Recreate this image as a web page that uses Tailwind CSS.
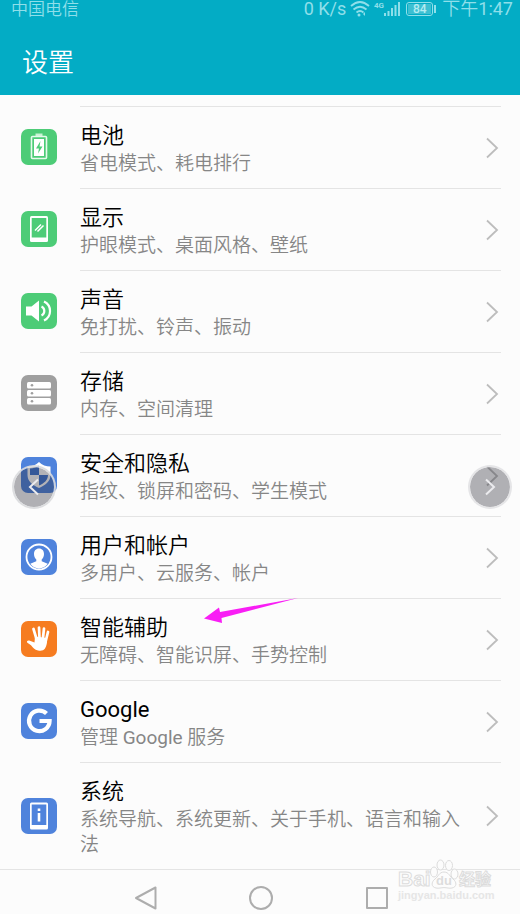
<!DOCTYPE html>
<html lang="zh-CN">
<head>
<meta charset="utf-8">
<meta name="viewport" content="width=device-width, initial-scale=1">
<title>设置</title>
<script src="https://cdn.jsdelivr.net/npm/@tailwindcss/browser@4"></script>
</head>
<body class="bg-[#fcfcfc] font-['Roboto','Noto_Sans_CJK_SC',sans-serif]">
<div class="relative flex min-h-screen flex-col overflow-hidden">

  <header class="bg-[#03acc5] pb-[14px]">
    <div class="flex h-[18px] items-center justify-between pr-[7px] pl-[11px] text-[17px] leading-[18px] font-[350] text-[#8fdfea]">
      <span>中国电信</span>
      <div class="flex items-center">
        <span class="text-lg leading-[18px] font-normal">0 K/s</span>
        <svg class="ml-1 h-4 w-5" viewBox="0 0 20 16" fill="none" stroke="currentColor" stroke-width="1.8" aria-label="Wi-Fi">
          <path d="M1 5Q10-3 19 5M3.500 8.500Q10 3 16.500 8.500M6.500 11.500Q10 8.500 13.500 11.500"/><circle cx="9" cy="14" r="1.500" fill="currentColor" stroke="none"/><path d="M15 11v4l-2-2z" fill="currentColor" stroke="none"/>
        </svg>
        <svg class="ml-1 h-4 w-7" viewBox="0 0 28 16" aria-label="4G">
          <text x="0" y="7" font-size="8" font-weight="700" fill="currentColor">4G</text>
          <path d="M10 12h2v3h-2zM13.500 10h2v5h-2zM17 7h2v8h-2zM20.500 4h2v11h-2zM24 1h2v14h-2z" fill="currentColor"/>
        </svg>
        <span class="ml-1 flex h-[14px] w-[27px] items-center justify-center rounded-[3px] border border-current p-px"><span class="flex h-full w-full items-center justify-center bg-[#3dbfd1] text-xs leading-none font-medium text-[#b5edf3]">84</span></span>
        <span class="h-2 w-[2px] ml-px bg-[#8fdfea]"></span>
        <span class="ml-[6px] text-lg leading-[18px] font-normal"><span class="font-[350]">下午</span>1:47</span>
      </div>
    </div>
    <h1 class="mt-7 pl-[22px] text-[26px] leading-[35px] font-[350] text-white">设置</h1>
  </header>

  <main class="pt-[11px]">
    <ul>
      <li><a href="#battery" class="flex items-center pr-[19px] pl-[21px]">
        <svg class="size-9 shrink-0" viewBox="0 0 36 36"><rect width="36" height="36" rx="7" fill="#4dcc77"/><path d="M14.500 4.500h7v3h-7z" fill="#c9f2d5"/><rect x="10.500" y="7.500" width="15" height="22" rx="1" fill="none" stroke="#e6faec" stroke-width="1.600"/><path d="M13 10h10v17H13z" fill="#fff"/><path d="M19.500 12l-4.500 7.500h3l-1 5 4.500-7h-3z" fill="#4dcc77"/></svg>
        <div class="ml-[23px] flex flex-1 items-center border-t border-[#e4e4e4] pt-[14px] pb-3"><div class="flex-1"><h2 class="text-[22px] leading-[30px] font-[350] text-black">电池</h2><p class="text-[19px] leading-[25px] font-[350] text-[#868686]">省电模式、耗电排行</p></div>
        <svg class="mr-[2px] ml-6 h-6 w-[14px] shrink-0" viewBox="0 0 14 24" fill="none" stroke="#bdbdbd" stroke-width="1.800"><path d="M2 1.500l10 9.500-10 9.500"/></svg></div>
      </a></li>
      <li><a href="#display" class="flex items-center pr-[19px] pl-[21px]">
        <svg class="size-9 shrink-0" viewBox="0 0 36 36"><rect width="36" height="36" rx="7" fill="#4dcc77"/><rect x="9" y="5" width="18" height="26" rx="1.500" fill="#fff"/><path d="M10.700 7h14.600v19.500H10.700z" fill="#4dcc77"/><path d="M14 19.500l6-6M16.500 20.500l6-6" stroke="#fff" stroke-width="1.500"/></svg>
        <div class="ml-[23px] flex flex-1 items-center border-t border-[#e4e4e4] pt-[14px] pb-3"><div class="flex-1"><h2 class="text-[22px] leading-[30px] font-[350] text-black">显示</h2><p class="text-[19px] leading-[25px] font-[350] text-[#868686]">护眼模式、桌面风格、壁纸</p></div>
        <svg class="mr-[2px] ml-6 h-6 w-[14px] shrink-0" viewBox="0 0 14 24" fill="none" stroke="#bdbdbd" stroke-width="1.800"><path d="M2 1.500l10 9.500-10 9.500"/></svg></div>
      </a></li>
      <li><a href="#sound" class="flex items-center pr-[19px] pl-[21px]">
        <svg class="size-9 shrink-0" viewBox="0 0 36 36"><rect width="36" height="36" rx="7" fill="#4dcc77"/><path d="M5 13.500h5.500L18 7.500v21l-7.500-6H5z" fill="#fff"/><path d="M20.500 13.500a5 5 0 0 1 0 9M23 8.500a10.500 10.500 0 0 1 0 19" fill="none" stroke="#fff" stroke-width="2.200"/></svg>
        <div class="ml-[23px] flex flex-1 items-center border-t border-[#e4e4e4] pt-[14px] pb-3"><div class="flex-1"><h2 class="text-[22px] leading-[30px] font-[350] text-black">声音</h2><p class="text-[19px] leading-[25px] font-[350] text-[#868686]">免打扰、铃声、振动</p></div>
        <svg class="mr-[2px] ml-6 h-6 w-[14px] shrink-0" viewBox="0 0 14 24" fill="none" stroke="#bdbdbd" stroke-width="1.800"><path d="M2 1.500l10 9.500-10 9.500"/></svg></div>
      </a></li>
      <li><a href="#storage" class="flex items-center pr-[19px] pl-[21px]">
        <svg class="size-9 shrink-0" viewBox="0 0 36 36"><rect width="36" height="36" rx="7" fill="#9f9f9f"/><g fill="#fff"><rect x="6" y="7" width="24" height="6.500" rx="1.500"/><rect x="6" y="15" width="24" height="6.500" rx="1.500"/><rect x="6" y="23" width="24" height="6.500" rx="1.500"/></g><g fill="#9f9f9f"><circle cx="11" cy="10.200" r="1.300"/><circle cx="11" cy="18.200" r="1.300"/><circle cx="11" cy="26.200" r="1.300"/></g></svg>
        <div class="ml-[23px] flex flex-1 items-center border-t border-[#e4e4e4] pt-[14px] pb-3"><div class="flex-1"><h2 class="text-[22px] leading-[30px] font-[350] text-black">存储</h2><p class="text-[19px] leading-[25px] font-[350] text-[#868686]">内存、空间清理</p></div>
        <svg class="mr-[2px] ml-6 h-6 w-[14px] shrink-0" viewBox="0 0 14 24" fill="none" stroke="#bdbdbd" stroke-width="1.800"><path d="M2 1.500l10 9.500-10 9.500"/></svg></div>
      </a></li>
      <li><a href="#security" class="flex items-center pr-[19px] pl-[21px]">
        <svg class="size-9 shrink-0" viewBox="0 0 36 36"><rect width="36" height="36" rx="7" fill="#4f83dc"/><path d="M18 5C15 8 11 9.500 6.500 9.500V18c0 6.500 5.500 10.500 11.500 13C24 28.500 29.500 24.500 29.500 18V9.500C25 9.500 21 8 18 5z" fill="#fff"/><path d="M9 11.500c3.500 0 6.500-1 9-3V18H9zM18 18h9c0 5-4 8.500-9 10.500z" fill="#3f76d2"/></svg>
        <div class="ml-[23px] flex flex-1 items-center border-t border-[#e4e4e4] pt-[14px] pb-3"><div class="flex-1"><h2 class="text-[22px] leading-[30px] font-[350] text-black">安全和隐私</h2><p class="text-[19px] leading-[25px] font-[350] text-[#868686]">指纹、锁屏和密码、学生模式</p></div>
        <svg class="mr-[2px] ml-6 h-6 w-[14px] shrink-0" viewBox="0 0 14 24" fill="none" stroke="#bdbdbd" stroke-width="1.800"><path d="M2 1.500l10 9.500-10 9.500"/></svg></div>
      </a></li>
      <li><a href="#users" class="flex items-center pr-[19px] pl-[21px]">
        <svg class="size-9 shrink-0" viewBox="0 0 36 36"><rect width="36" height="36" rx="7" fill="#4f83dc"/><circle cx="18" cy="18" r="12.500" fill="none" stroke="#fff" stroke-width="1.800"/><path d="M18 9.500c3.200 0 5 2.300 5 5.500 0 2.500-1 4.300-2.300 5.400v1.800l6 2.600A11.500 11.500 0 0 1 18 29.500a11.500 11.500 0 0 1-8.700-4.700l6-2.600v-1.800C14 19.300 13 17.500 13 15c0-3.200 1.800-5.500 5-5.500z" fill="#fff"/></svg>
        <div class="ml-[23px] flex flex-1 items-center border-t border-[#e4e4e4] pt-[14px] pb-3"><div class="flex-1"><h2 class="text-[22px] leading-[30px] font-[350] text-black">用户和帐户</h2><p class="text-[19px] leading-[25px] font-[350] text-[#868686]">多用户、云服务、帐户</p></div>
        <svg class="mr-[2px] ml-6 h-6 w-[14px] shrink-0" viewBox="0 0 14 24" fill="none" stroke="#bdbdbd" stroke-width="1.800"><path d="M2 1.500l10 9.500-10 9.500"/></svg></div>
      </a></li>
      <li><a href="#assist" class="flex items-center pr-[19px] pl-[21px]">
        <svg class="size-9 shrink-0" viewBox="0 0 36 36"><rect width="36" height="36" rx="7" fill="#f67c20"/><path d="M12.500 8l3 10M18 6.500l.5 11M23 7.500l-1.200 11M27 11l-2.500 10" stroke="#fff" stroke-width="2.700" stroke-linecap="round"/><path d="M14 15.500l12 1.500c.3 4-.2 7.500-2 10.500-1.500 2.200-4 2.500-7 2-3.500-.6-5-2.800-7-5.200l-3.600-2.600c-1.200-1.200.2-2.700 1.800-2.200l5.300 2z" fill="#fff"/></svg>
        <div class="ml-[23px] flex flex-1 items-center border-t border-[#e4e4e4] pt-[14px] pb-3"><div class="flex-1"><h2 class="text-[22px] leading-[30px] font-[350] text-black">智能辅助</h2><p class="text-[19px] leading-[25px] font-[350] text-[#868686]">无障碍、智能识屏、手势控制</p></div>
        <svg class="mr-[2px] ml-6 h-6 w-[14px] shrink-0" viewBox="0 0 14 24" fill="none" stroke="#bdbdbd" stroke-width="1.800"><path d="M2 1.500l10 9.500-10 9.500"/></svg></div>
      </a></li>
      <li><a href="#google" class="flex items-center pr-[19px] pl-[21px]">
        <svg class="size-9 shrink-0" viewBox="0 0 36 36"><rect width="36" height="36" rx="7" fill="#4f83dc"/><path d="M25.500 10.500A10.300 10.300 0 1 0 28.600 18H18.500" fill="none" stroke="#fff" stroke-width="4.200"/></svg>
        <div class="ml-[23px] flex flex-1 items-center border-t border-[#e4e4e4] pt-[14px] pb-3"><div class="flex-1"><h2 class="text-[22px] leading-[30px] font-normal text-black">Google</h2><p class="text-[19px] leading-[25px] font-[350] text-[#868686]">管理 <span class="font-normal">Google</span> 服务</p></div>
        <svg class="mr-[2px] ml-6 h-6 w-[14px] shrink-0" viewBox="0 0 14 24" fill="none" stroke="#bdbdbd" stroke-width="1.800"><path d="M2 1.500l10 9.500-10 9.500"/></svg></div>
      </a></li>
      <li><a href="#system" class="flex items-center pr-[19px] pl-[21px]">
        <svg class="size-9 shrink-0" viewBox="0 0 36 36"><rect width="36" height="36" rx="7" fill="#4f83dc"/><rect x="9" y="4.500" width="18" height="27" rx="1.500" fill="#fff"/><path d="M10.700 6.500h14.600v20.500H10.700z" fill="#4f83dc"/><path d="M16.700 10.500h2.600v2.600h-2.600zM16.700 15h2.600v8.500h-2.600z" fill="#fff"/></svg>
        <div class="ml-[23px] flex flex-1 items-center border-t border-[#e4e4e4] pt-[14px] pb-3"><div class="flex-1"><h2 class="text-[22px] leading-[30px] font-[350] text-black">系统</h2><p class="text-[19px] leading-[25px] font-[350] text-[#868686]">系统导航、系统更新、关于手机、语言和输入法</p></div>
        <svg class="mr-[2px] ml-6 h-6 w-[14px] shrink-0" viewBox="0 0 14 24" fill="none" stroke="#bdbdbd" stroke-width="1.800"><path d="M2 1.500l10 9.500-10 9.500"/></svg></div>
      </a></li>
    </ul>
  </main>

  <nav class="flex-1 border-t border-[#e4e4e4] pt-4 pl-[2px]">
    <div class="mx-auto grid w-2/3 grid-cols-3 justify-items-center text-[#adadad]">
      <button aria-label="返回"><svg class="size-6" viewBox="0 0 24 24" fill="none" stroke="currentColor" stroke-width="2" stroke-linejoin="round"><path d="M21.500 1.500v21L2 12z"/></svg></button>
      <button aria-label="主屏幕"><svg class="size-6" viewBox="0 0 24 24" fill="none" stroke="currentColor" stroke-width="2"><circle cx="12" cy="12" r="11"/></svg></button>
      <button aria-label="最近任务"><svg class="size-6" viewBox="0 0 24 24" fill="none" stroke="currentColor" stroke-width="2" stroke-linejoin="round"><path d="M3 2h20v20H3z"/></svg></button>
    </div>
  </nav>

  <!-- Gallery arrows over the list -->
  <button aria-label="上一张" class="absolute top-[465px] left-3 flex size-11 items-center justify-center rounded-full border-2 border-[#d9dadd]/90 bg-[#21222f]/35 bg-clip-padding text-[#ebebee]"><svg class="h-5 w-3" viewBox="0 0 12 20" fill="none" stroke="currentColor" stroke-width="2"><path d="M10 2.500L2 10l8 7.500"/></svg></button>
  <button aria-label="下一张" class="absolute top-[465px] right-2 flex size-11 items-center justify-center rounded-full border-2 border-[#e2e2e4]/90 bg-[#21222f]/35 bg-clip-padding text-[#ebebee]"><svg class="h-5 w-3" viewBox="0 0 12 20" fill="none" stroke="currentColor" stroke-width="2"><path d="M2 2.500l8 7.500-8 7.500"/></svg></button>

  <!-- Pointer to the assist row -->
  <svg class="absolute top-[597px] left-[203px] h-7 w-24" viewBox="0 0 96 28" fill="#f91ef5" aria-hidden="true"><path d="M1 21.500L16 10.500l1 4.500L95 1 18.500 21l.5 5z"/></svg>

  <!-- Watermark -->
  <svg class="absolute right-5 bottom-[10px] h-12 w-[104px]" viewBox="0 0 104 48" fill="#fcfcfc" stroke="#dcdcdc" stroke-width="1" aria-hidden="true">
    <text x="2" y="30" font-family="Liberation Sans" font-size="21" font-weight="700">Bai</text>
    <ellipse cx="38" cy="16" rx="3.500" ry="5"/><ellipse cx="44.500" cy="9" rx="3.500" ry="5"/><ellipse cx="53" cy="9.500" rx="3.500" ry="5"/><ellipse cx="58.500" cy="18" rx="3.500" ry="5"/>
    <path d="M48 16c5 0 6 5 9 7 4 3 4 8-1 9-3 .6-5-.4-8-.4s-5 1-8 .4c-5-1-5-6-1-9 3-2 4-7 9-7z"/>
    <text x="40" y="29" font-family="Liberation Sans" font-size="13" font-weight="700" fill="#dcdcdc" stroke="none">du</text>
    <text x="63" y="29" font-family="Noto Sans CJK SC" font-size="16" font-weight="700">经验</text>
    <text x="2" y="43" font-family="Liberation Sans" font-size="11" font-weight="700" stroke="none" fill="#e6e6e6">jingyan.baidu.com</text>
  </svg>
</div>
</body>
</html>
